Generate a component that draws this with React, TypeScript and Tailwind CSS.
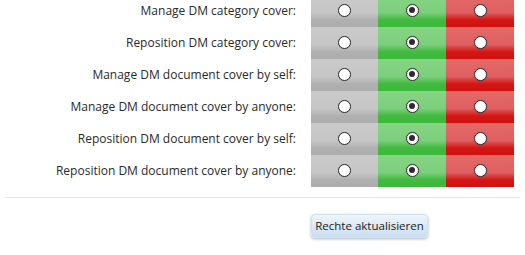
import React from "react";

const rows = [
  "Manage DM category cover:",
  "Reposition DM category cover:",
  "Manage DM document cover by self:",
  "Manage DM document cover by anyone:",
  "Reposition DM document cover by self:",
  "Reposition DM document cover by anyone:",
];

function Radio({ checked }: { checked?: boolean }) {
  return (
    <div className="w-[13px] h-[13px] rounded-full bg-white border border-[#333] flex items-center justify-center shadow-[0_0_1px_rgba(0,0,0,0.3)]">
      {checked && <div className="w-[6px] h-[6px] rounded-full bg-[#2b2b2b]" />}
    </div>
  );
}

export default function App() {
  return (
    <div className="w-[525px] h-[255px] bg-white overflow-hidden font-['Open_Sans',sans-serif] text-[#2a2a2a]">
      <div className="mt-[-5px]">
        {rows.map((label) => (
          <div key={label} className="flex h-[32px]">
            <div className="w-[311px] pr-[15px] flex items-center justify-end text-[12px]">
              {label}
            </div>
            <div className="w-[67px] flex items-center justify-center pb-[2px] bg-[linear-gradient(to_bottom,#cacaca_0%,#c6c6c6_55%,#b0b0b0_78%,#acacac_100%)]">
              <Radio />
            </div>
            <div className="w-[68px] flex items-center justify-center pb-[2px] bg-[linear-gradient(to_bottom,#86d486_0%,#7ccf7c_55%,#40ba40_78%,#3cb83c_100%)]">
              <Radio checked />
            </div>
            <div className="w-[68px] flex items-center justify-center pb-[2px] bg-[linear-gradient(to_bottom,#e46a6a_0%,#de5f5f_55%,#d21616_78%,#d01010_100%)]">
              <Radio />
            </div>
          </div>
        ))}
      </div>
      <div className="mx-[5px] mt-[10px] border-t border-[#e4e4e4]" />
      <div className="pl-[311px] pt-[14px]">
        <button className="h-[24px] w-[117px] rounded-[4px] text-[11.5px] text-[#222] bg-[linear-gradient(to_bottom,#eef5fb,#c9def0)] shadow-[0_1px_3px_rgba(80,110,140,0.5)] border border-[#d4e2ee]">
          Rechte aktualisieren
        </button>
      </div>
    </div>
  );
}
